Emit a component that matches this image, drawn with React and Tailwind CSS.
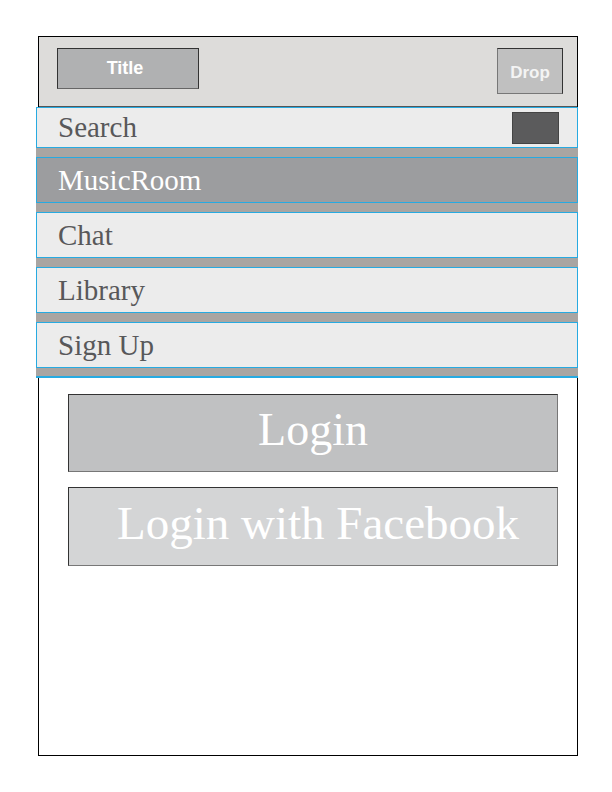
export default function App() {
  const serif = { fontFamily: '"Liberation Serif", "Times New Roman", serif' };
  const sans = { fontFamily: '"Liberation Sans", Arial, sans-serif' };
  const rows = [
    { label: "MusicRoom", active: true },
    { label: "Chat" },
    { label: "Library" },
    { label: "Sign Up" },
  ];
  return (
    <div className="w-[612px] h-[792px] bg-white pt-[36px] pl-[38px]">
      <div className="w-[540px] h-[720px] border border-black flex flex-col">
        <div className="h-[70px] bg-[#dddcda] border-b border-[#555] flex items-start justify-between pl-[18px] pr-[14px] pt-[11px]">
          <div
            className="w-[142px] h-[41px] bg-[#b0b1b2] border border-[#333] border-b-[#666] flex items-center justify-center pr-[6px] text-white font-bold text-[18px]"
            style={sans}
          >
            Title
          </div>
          <div
            className="w-[66px] h-[46px] bg-[#c0c0c0] border border-[#333] border-l-[#777] border-b-[#777] flex items-center justify-center pt-[3px] text-[#f4f4f4] font-bold text-[17px]"
            style={sans}
          >
            Drop
          </div>
        </div>
        <div className="bg-[#a9a5a2] border-b-2 border-[#27aae1] flex flex-col gap-[9px] pb-[8px] -ml-[3px] -mr-[1px]">
          <div className="h-[41px] bg-[#ececec] border border-[#27aae1] flex items-center justify-between pl-[21px] pr-[18px]">
            <span className="text-[29px] leading-none text-[#58585a]" style={serif}>
              Search
            </span>
            <div className="w-[47px] h-[32px] bg-[#5b5b5c] border border-[#444]" />
          </div>
          {rows.map((r) => (
            <div
              key={r.label}
              className={
                r.active
                  ? "h-[46px] bg-[#9c9d9f] border border-[#27aae1] flex items-center pl-[21px]"
                  : "h-[46px] bg-[#ececec] border border-[#27aae1] flex items-center pl-[21px]"
              }
            >
              <span
                className={
                  r.active
                    ? "text-[29px] leading-none text-white"
                    : "text-[29px] leading-none text-[#58585a]"
                }
                style={serif}
              >
                {r.label}
              </span>
            </div>
          ))}
        </div>
        <div className="flex flex-col gap-[15px] pt-[16px] pl-[29px]">
          <div
            className="w-[490px] h-[78px] bg-[#c0c1c2] border border-[#333] border-r-[#777] border-b-[#777] flex items-center justify-center pb-[6px] text-white text-[46px] leading-none"
            style={serif}
          >
            Login
          </div>
          <div
            className="w-[490px] h-[79px] bg-[#d4d5d6] border border-[#333] border-r-[#777] border-b-[#777] flex items-center justify-center pb-[6px] pl-[10px] text-white text-[47px] leading-none"
            style={serif}
          >
            Login with Facebook
          </div>
        </div>
      </div>
    </div>
  );
}
